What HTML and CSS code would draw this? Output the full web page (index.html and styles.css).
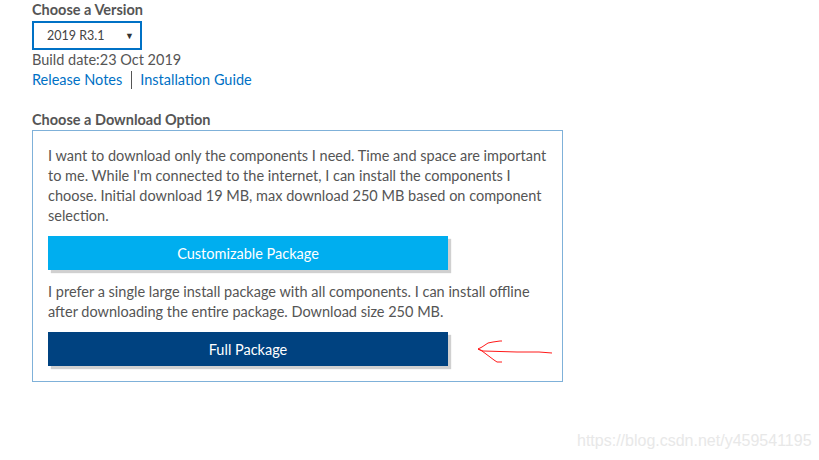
FILE: index.html
```html
<!DOCTYPE html>
<html>
<head>
<meta charset="utf-8">
<link rel="stylesheet" href="styles.css">
</head>
<body>
<div class="page">
  <h3 class="label">Choose a Version</h3>
  <div class="select"><span>2019 R3.1</span><span class="caret">▼</span></div>
  <div class="build">Build date:23 Oct 2019</div>
  <div class="links"><a href="#">Release Notes</a><span class="sep"></span><a href="#">Installation Guide</a></div>

  <h3 class="label label2">Choose a Download Option</h3>
  <div class="box">
    <p>I want to download only the components I need. Time and space are important to me. While I'm connected to the internet, I can install the components I choose. Initial download 19 MB, max download 250 MB based on component selection.</p>
    <div class="btn btn-light">Customizable Package</div>
    <p>I prefer a single large install package with all components. I can install offline after downloading the entire package. Download size 250 MB.</p>
    <div class="btn-row">
      <div class="btn btn-dark">Full Package</div>
      <svg class="arrow" width="80" height="26" viewBox="0 0 80 26">
        <polyline points="25,1 23,1 16,2 11,3 8,5 5,7 1,9 5,11 9,14 13,17 17,20 20,22 25,22" fill="none" stroke="#ff1a1a" stroke-width="1"/>
        <polyline points="1,9 6,11 40,12 62,12 75,13" fill="none" stroke="#ff1a1a" stroke-width="1"/>
      </svg>
    </div>
  </div>
</div>
<div class="watermark">https://blog.csdn.net/y459541195</div>
</body>
</html>
```
FILE: styles.css
```css
html, body { margin: 0; padding: 0; background: #fff; }
body { font-family: Lato, "Open Sans", sans-serif; font-size: 14.5px; color: #555; width: 819px; height: 460px; overflow: hidden; position: relative; }
.page { padding: 0 0 0 32px; }
.label { margin: 0; font-size: 14.5px; font-weight: bold; color: #555; line-height: 20px; }
.select { box-sizing: border-box; width: 110px; height: 29px; border: 2px solid #0071c5; margin-top: 1px; display: flex; align-items: center; justify-content: space-between; padding: 0 6px 0 13px; font-size: 12.5px; color: #444; }
.caret { font-size: 9px; color: #333; }
.build { line-height: 20px; margin-top: 0; }
.links { display: flex; align-items: center; line-height: 20px; }
.links a { color: #0071c5; text-decoration: none; }
.sep { display: inline-block; width: 1px; height: 18px; background: #555; margin: 0 8px 0 9px; }
.label2 { margin-top: 20px; }
.box { box-sizing: border-box; width: 531px; border: 1px solid #7fb1d9; padding: 15px 14px 15px 15px; }
.box p { margin: 0; line-height: 20px; }
.btn { box-sizing: border-box; width: 400px; height: 34px; flex-shrink: 0; display: flex; align-items: center; justify-content: center; color: #fff; font-size: 14.5px; box-shadow: 3px 3px 1px #d0d0d0; }
.btn-light { background: #00aeef; margin-top: 10px; margin-bottom: 12px; }
.btn-dark { background: #004280; }
.btn-row { display: flex; align-items: flex-start; margin-top: 10px; }
.arrow { flex-shrink: 0; margin: 8px 0 0 29px; }
.watermark { position: absolute; left: 577px; top: 432px; font-family: "Liberation Sans", sans-serif; font-size: 16px; color: #e8e8e8; }
```
